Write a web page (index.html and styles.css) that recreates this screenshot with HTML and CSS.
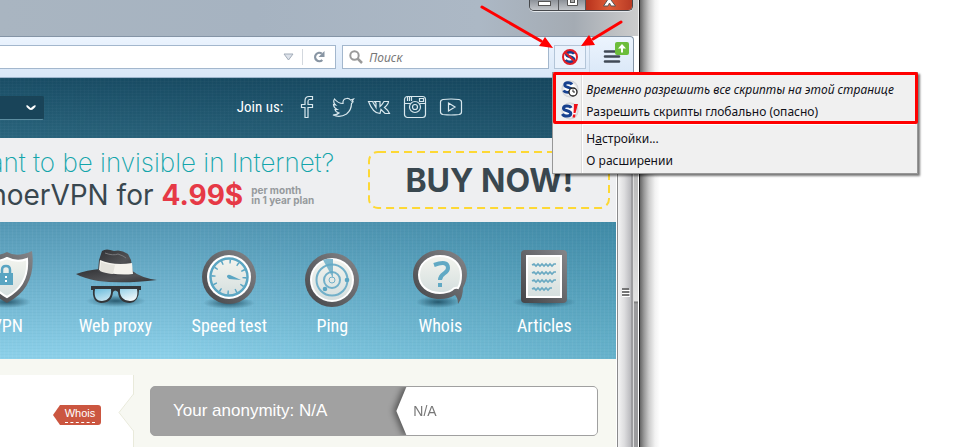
FILE: index.html
```
<!DOCTYPE html>
<html lang="ru">
<head>
<meta charset="utf-8">
<title>Whoer</title>
<link rel="stylesheet" href="styles.css">
</head>
<body>
<svg width="0" height="0" class="defs" aria-hidden="true">
  <defs>
    <linearGradient id="rim" x1="1" y1="0" x2="0" y2="1"><stop offset="0" stop-color="#85868a"/><stop offset="1" stop-color="#444548"/></linearGradient>
    <linearGradient id="face" x1="0" y1="0" x2="0" y2="1"><stop offset="0" stop-color="#f3f4ee"/><stop offset="1" stop-color="#d5dfdf"/></linearGradient>
    <linearGradient id="lens" x1="0" y1="0" x2="1" y2="1"><stop offset="0" stop-color="#6bbcdc"/><stop offset="1" stop-color="#ffffff"/></linearGradient>
    <linearGradient id="felt" x1="0" y1="0" x2="1" y2="1"><stop offset="0" stop-color="#303134"/><stop offset=".6" stop-color="#525356"/><stop offset="1" stop-color="#303134"/></linearGradient>
    <radialGradient id="shade"><stop offset="0" stop-color="#103c50" stop-opacity=".75"/><stop offset="1" stop-color="#103c50" stop-opacity="0"/></radialGradient>
    <radialGradient id="disc"><stop offset=".6" stop-color="#fff"/><stop offset="1" stop-color="#c9cbd0"/></radialGradient>
    <symbol id="s-mark" viewBox="0 0 16 16"><path d="M12.200 4.800C11 2.400 4.500 2 4.500 5.300C4.500 8.600 11.800 7 11.800 10.500C11.800 14 4.800 13.800 3.400 11" fill="none" stroke="#17418f" stroke-width="3"/></symbol>
  </defs>
</svg>
<div class="desktop">
  <div class="browser">
    <header class="titlebar">
      <div class="caption">
        <button class="cap" aria-label="Свернуть"><svg width="28" height="10"><rect x="8.500" y="1.500" width="12" height="4" fill="#fff" stroke="#555"/></svg></button>
        <button class="cap" aria-label="Развернуть"><svg width="26" height="10"><path d="M8.500-2V5.500H18.500V-2" fill="#fff" stroke="#555"/><rect x="11.500" y="-1.500" width="4" height="4" fill="#aaa" stroke="#555"/></svg></button>
        <button class="cap cap-close" aria-label="Закрыть"><svg width="46" height="10"><path d="M17.500 6L21.500 0L19-4H28L25 0L29.500 6H25L23.500 3L22 6Z" fill="#fff" stroke="#555"/></svg></button>
      </div>
    </header>
    <div class="toolbar">
      <div class="url">
        <input class="url-input" type="text" aria-label="Адрес">
        <button class="plain" aria-label="Журнал"><svg width="11" height="8"><path d="M1 1H10L5.500 7Z" fill="#dde2ea" stroke="#a2acb8"/></svg></button>
        <button class="plain reload" aria-label="Обновить"><svg width="14" height="14"><path d="M9.800 3.600A4.200 4.200 0 1 0 10.300 10" fill="none" stroke="#8895a3" stroke-width="2.300"/><path d="M12.500 1V7H6.500Z" fill="#8895a3"/></svg></button>
      </div>
      <div class="search">
        <svg width="15" height="15"><circle cx="5.500" cy="5.500" r="4.200" fill="none" stroke="#999" stroke-width="2"/><path d="M8.500 8.500L13 13" stroke="#999" stroke-width="2.500"/></svg>
        <input class="search-input" type="text" placeholder="Поиск" aria-label="Поиск">
      </div>
      <button class="ext" aria-label="NoScript"><svg width="18" height="18"><circle cx="9" cy="9" r="7" fill="#fff"/><use href="#s-mark" x="1" y="1" width="16" height="16"/><circle cx="9" cy="9" r="7" fill="none" stroke="#e01e26" stroke-width="2"/><path d="M4 4L14 14" stroke="#e01e26" stroke-width="2"/></svg></button>
      <button class="burger" aria-label="Меню">
        <svg width="28" height="24"><path d="M3 10.500H17M3 15.500H17M3 20.500H17" stroke="#414a56" stroke-width="2.600" stroke-linecap="round"/><rect x="13" y="1" width="14" height="13" rx="2" fill="#6cbd3b"/><path d="M20 3L24 7.500H21V11.500H19V7.500H16Z" fill="#fff"/></svg>
      </button>
    </div>
    <div class="viewport">
      <main class="page">
        <div class="topline">
          <select class="lang" aria-label="Language"><option></option></select>
          <svg class="chevron" width="12" height="8"><path d="M1.500 2C3 2 4 5 5.800 5S9 2 10.500 2" fill="none" stroke="#fff" stroke-width="2.200"/></svg>
          <div class="social">
            <span class="join">Join us:</span>
            <a href="#" aria-label="Facebook"><svg width="24" height="24"><path d="M10 22.500V12.500H6.500V9.500H10V6Q10 1.500 14 1.500H17.500V4.500H14.500Q13 4.500 13 6.500V9.500H17.500V12.500H13V22.500Z"/></svg></a>
            <a href="#" aria-label="Twitter"><svg width="24" height="24"><path d="M2 20Q6 20 8 18Q4.500 17 4 14.500H6Q2.500 12.500 2.500 9.500L4.500 10Q1.500 7 3.500 4Q7 8.500 12 8.500Q11.500 4 15.500 3.500Q18 3 19.500 5L22.500 4L21 6.500L22 6.800L20.500 8.500Q20.500 15 15.500 19Q9 23 2 20Z"/></svg></a>
            <a href="#" aria-label="VK"><svg width="24" height="24"><path d="M1.500 6.500H5.500L9 12.500V8L7.500 6.500H13V11.500Q15 10 17 6.500H21.500Q21.500 9 17.500 12.500Q21 15 22.500 18.500H18L14 14.500L13 18.500Q6 18.500 1.500 6.500Z"/></svg></a>
            <a href="#" aria-label="Instagram"><svg width="24" height="24"><rect x="1.500" y="1.500" width="21" height="21" rx="3"/><path d="M1.500 8.500H7.500M16.500 8.500H22.500M4.500 2V6M6.500 2V6M8.500 2V6M16.500 3.500H20.500V6.500H16.500Z"/><circle cx="12" cy="12" r="5.500"/><circle cx="12" cy="12" r="2.500"/></svg></a>
            <a href="#" aria-label="YouTube"><svg width="24" height="24"><path d="M4 4.500Q12 3.500 20 4.500Q22.500 5 22.500 7V17Q22.500 19 20 19.500Q12 20.500 4 19.500Q1.500 19 1.500 17V7Q1.500 5 4 4.500ZM9.500 8L16 12L9.500 16Z"/></svg></a>
          </div>
        </div>
        <a class="promo" href="#">
          <span class="pitch">
            <span class="ask">Want to be invisible in Internet?</span>
            <span class="offer"><span>WhoerVPN for</span> <b class="price">4.99$</b> <span class="per">per month<br>in 1 year plan</span></span>
          </span>
          <span class="buy"><svg class="dash" width="242" height="58"><rect x="1" y="1" width="240" height="56" rx="9"/></svg>BUY NOW!</span>
        </a>
        <nav class="tools">
          <a href="#"><svg width="84" height="66" viewBox="0 0 84 66"><ellipse cx="42" cy="56" rx="24" ry="6" fill="url(#shade)"/><path d="M42 6Q52 12 67 5Q72 42 42 57Q12 42 17 5Q32 12 42 6Z" fill="url(#rim)"/><path d="M42 12Q52 17 62 13Q64 39 42 51Q20 39 22 13Q32 17 42 12Z" fill="url(#face)" stroke="#fff" stroke-width="2"/><rect x="34" y="27" width="14" height="12" fill="#5aa5c2"/><path d="M37 27V24Q37 20 41 20T45 24V27" fill="none" stroke="#5aa5c2" stroke-width="2.500"/><path d="M41 30V36" stroke="#fff" stroke-width="2" stroke-dasharray="2"/></svg>VPN</a>
          <a href="#"><svg width="84" height="66" viewBox="0 0 84 66"><ellipse cx="43" cy="55" rx="30" ry="6" fill="url(#shade)"/><path d="M3 28Q14 24 27 23L58 24Q68 32 84 34Q50 38 25 35Q10 32 3 28Z" fill="url(#felt)"/><path d="M26 14L29 5Q33 2 41 5Q48 3 55 8L58 14L60 28Q42 31 25 25Z" fill="url(#felt)"/><path d="M27 14Q41 20 59 17L60 28Q42 30 26 24Z" fill="#f4f3ed"/><path d="M28 16Q36 19 42 19L40 28Q31 27 27 25Z" fill="#e4e3dc"/><path d="M32 7Q40 10 45 8Q51 10 53 12" stroke="#77787b" fill="none"/><path d="M18 40H68V44H66Q66 56 57 57Q46 57 45 46Q42 43 40 46Q39 57 28 57Q19 56 20 44H18Z" fill="#333639"/><path d="M22 43H38Q39 54 29 55Q20 55 22 43ZM47 43H64Q66 55 57 55Q46 54 47 43Z" fill="url(#lens)"/></svg>Web proxy</a>
          <a href="#"><svg width="84" height="66" viewBox="0 0 84 66"><ellipse cx="42" cy="57" rx="26" ry="6" fill="url(#shade)"/><circle cx="42" cy="31" r="27" fill="url(#rim)"/><circle cx="42" cy="31" r="22" fill="#fff"/><circle cx="42" cy="31" r="18.500" fill="url(#face)" stroke="#5ba6c3" stroke-width="2.500"/><circle cx="42" cy="31" r="15.500" fill="none" stroke="#5ba6c3" stroke-width="4" stroke-dasharray="1.500 6.616"/><path d="M40 31A2 2 0 0 1 43 29L54 34L42 33Z" fill="#5ba6c3"/></svg>Speed test</a>
          <a href="#"><svg width="84" height="66" viewBox="0 0 84 66"><circle cx="42" cy="34" r="27" fill="url(#rim)"/><circle cx="42" cy="34" r="22" fill="#fff"/><circle cx="42" cy="34" r="20" fill="url(#face)"/><g fill="none" stroke="#72b0c9" stroke-width="2"><circle cx="42" cy="34" r="15.500"/><circle cx="42" cy="34" r="8"/><circle cx="42" cy="34" r="3" stroke-width="1"/></g><path d="M33 14Q38 12 43 13V32Z" fill="#62a9c4" opacity=".8"/><circle cx="57" cy="34" r="2.300" fill="#5ba6c3"/><circle cx="35" cy="43" r="2.300" fill="#5ba6c3"/></svg>Ping</a>
          <a href="#"><svg width="84" height="66" viewBox="0 0 84 66"><ellipse cx="40" cy="56" rx="22" ry="6" fill="url(#shade)"/><path d="M42 4C58 4 69 14 69 28Q69 34 65 42Q65 51 60 58Q60 52 57 49Q51 53 42 53C26 53 15 43 15 29S27 4 42 4Z" fill="url(#rim)"/><path d="M42 10C54 10 63 17 63 29Q63 37 60 42Q56 41 54 44Q49 47 42 47C30 47 21 40 21 29S30 10 42 10Z" fill="url(#face)" stroke="#fff" stroke-width="2"/><path d="M36 19Q50 14 50 22C50 28 42 27 42 34" fill="none" stroke="#61a9c4" stroke-width="4"/><rect x="40" y="37" width="4" height="4" fill="#61a9c4"/></svg>Whois</a>
          <a href="#"><svg width="84" height="66" viewBox="0 0 84 66"><ellipse cx="42" cy="56" rx="32" ry="6" fill="url(#shade)"/><rect x="19" y="4" width="46" height="53" rx="4" fill="url(#rim)"/><rect x="25" y="10" width="34" height="41" fill="url(#face)" stroke="#fff" stroke-width="2"/><path d="M30 19L32 18L34 20L36 18L38 20L40 18L42 20L44 18L46 20L48 18L50 20L52 18L54 18M30 27L32 26L34 28L36 26L38 28L40 26L42 28L44 26L46 28L48 26L50 28L52 26L54 26M30 35L32 34L34 36L36 34L38 36L40 34L42 36L44 34L46 36L48 34L50 36L52 34L54 34M30 43L32 42L34 44L36 42L38 44L40 42L42 44L44 42L46 44L48 42L50 42" fill="none" stroke="#69a9c2" stroke-width="1.700"/></svg>Articles</a>
        </nav>
        <section class="info">
          <div class="panel">
            <a class="tag" href="#"><span>Whois</span></a>
            <svg class="notch" width="16" height="37"><path d="M16 0L1 18.500L16 37Z" fill="#f7f8f2"/><path d="M15.500 0L1 18.500L15.500 37" fill="none" stroke="#e9eadb"/></svg>
          </div>
          <div class="anon">
            <div class="anon-label">Your anonymity: N/A</div>
            <div class="anon-cast"><div class="anon-value">N/A</div></div>
          </div>
        </section>
      </main>
      <div class="gutter"><svg width="8" height="10"><path d="M0 1H7M0 4H7M0 7H7" stroke="#555" stroke-width="1.500"/><path d="M0 2.500H8M0 5.500H8M0 8.500H8" stroke="#fff"/></svg></div>
      <div class="frame"></div>
    </div>
    <div class="menu" role="menu">
      <button class="item temp" role="menuitem"><svg width="18" height="18"><circle cx="9" cy="9" r="8.500" fill="url(#disc)"/><use href="#s-mark" x="-1" width="16" height="15"/><circle cx="12" cy="12" r="4" fill="#fff" stroke="#222" stroke-width="1.300"/><path d="M12 9.500V12H14" fill="none" stroke="#222"/></svg>Временно разрешить все скрипты на этой странице</button>
      <button class="item" role="menuitem"><svg width="18" height="18"><circle cx="9" cy="9" r="8.500" fill="url(#disc)"/><use href="#s-mark" x="-2" y="1" width="16" height="16"/><path d="M13 2H17L14.500 11H12.500ZM12 12.500H14.500L14 15.500H11.500Z" fill="#f01018"/></svg>Разрешить скрипты глобально (опасно)</button>
      <hr>
      <button class="item" role="menuitem"><i></i><span>Н<u>а</u>стройки...</span></button>
      <button class="item" role="menuitem"><i></i>О расширении</button>
      <div class="mark"></div>
    </div>
    <svg class="arrows" width="150" height="50"><path d="M2 7L61 41M141 22L113 39" stroke="#f00" stroke-width="3" stroke-linecap="round"/><path d="M73 48L59 46L65 37ZM101 46L109 35L115 45Z" fill="#f00"/></svg>
  </div>
  <div class="outside"></div>
</div>
</body>
</html>
```
FILE: styles.css
```
* { box-sizing: border-box; }
body { margin: 0; background: #fff; font-family: "Noto Sans", sans-serif; }
button { font: inherit; border: 0; padding: 0; background: none; }
a { color: inherit; text-decoration: none; }
svg { display: block; flex: none; }
.defs { position: absolute; }

.desktop { display: flex; min-height: 100vh; overflow: hidden; }
.browser { flex: 640 1 0; min-width: 0; position: relative; display: flex; flex-direction: column; border-right: 1px solid #1c1c1e; }
.outside { flex: 327 1 0; background: linear-gradient(90deg, #666 0, #999 4px, #ccc 9px, #f2f2f2 15px, #fff 20px); }

.titlebar { height: 36px; padding-right: 5px; display: flex; justify-content: flex-end; align-items: flex-start; background: linear-gradient(90deg, #a9b5c1 0%, #a6b3c1 40%, #acb8c5 75%, #a4abb3 90%, #ccc 100%); border-right: 1px solid #eee; }
.caption { display: flex; height: 11px; border: 1px solid #46484c; border-top: 0; border-radius: 0 0 5px 5px; overflow: hidden; box-shadow: 0 1px 0 #e4e8ec; }
.cap { display: flex; border-right: 1px solid #55575b; background: linear-gradient(#8d9299, #c3c6ca); }
.cap-close { border-right: 0; background: linear-gradient(90deg, #b8321c, #dd5c38 50%, #b83a24); }

.toolbar { height: 42px; margin-right: 5px; border: 1px solid #8494a6; border-left: 0; border-bottom-color: #9fb6cd; border-radius: 0 4px 0 0; background: linear-gradient(#ecf4fe, #d9e7f7); display: flex; align-items: center; padding-right: 4px; }
.url, .search { height: 24px; border: 1px solid #a3b7cd; background: #fff; display: flex; align-items: center; }
.url { flex: 1; border-left: 0; margin-right: 6px; min-width: 0; }
.url-input, .search-input { flex: 1; min-width: 0; border: 0; padding: 0; background: none; outline: 0; }
.url-input { height: 20px; }
.plain { display: flex; justify-content: center; width: 28px; }
.plain svg { margin: auto; }
.reload { width: 33px; border-left: 1px solid #d3d8de; height: 16px; }
.search { width: 207px; padding-left: 6px; gap: 5px; margin-right: 5px; }
.search-input { font: italic 12px "Noto Sans", sans-serif; height: 20px; }
.search-input::placeholder { color: #777; opacity: 1; }
.ext { width: 32px; height: 24px; border: 1px solid #b3c5d8; background: #eaf2fc; display: flex; align-items: center; justify-content: center; }
.burger { display: flex; align-items: flex-start; width: 40px; height: 36px; margin-left: 3px; padding: 2px 0 0 12px; border-left: 1px solid #c7d6e6; }

.viewport { flex: 1; display: flex; min-height: 0; }
.page { flex: 1; min-width: 0; overflow: hidden; background: #f7f8f2; display: flex; flex-direction: column; }
.gutter { width: 16px; border-left: 1px solid #8a8a8c; border-right: 2px solid #9c9c9f; background: linear-gradient(90deg, #f4f4f4, #dcdcde 50%, #b8b8bc); display: flex; align-items: flex-start; padding: 210px 0 0 4px; margin-left: 1px; }
.frame { width: 6px; border-right: 1px solid #fff; border-left: 1px solid #ddd; background: linear-gradient(#aaa, #bbb 100px, #e0e0e0 223px, #777 224px, #9c9c9e 226px); }

.topline { height: 60px; display: flex; align-items: center; color: #fff; background: repeating-linear-gradient(90deg, #ffffff05 0 1px, #0000 1px 4px), repeating-linear-gradient(#ffffff05 0 1px, #0000 1px 3px), linear-gradient(100deg, #2c6a8400, #0c354c55), linear-gradient(#194d65, #2a657d); }
.lang { appearance: none; width: 44px; height: 24px; border: 1px solid #1b4457; border-left: 0; border-bottom-color: #5c8da0; border-radius: 0 2px 2px 0; background: #194459; }
.chevron { margin-left: -19px; pointer-events: none; }
.social { margin: -2px 153px 0 auto; display: flex; align-items: center; gap: 12px; }
.social svg { fill: none; stroke: #d9e8ee; stroke-width: 1.2; }
.join { font: 15px "Roboto Condensed", "Liberation Sans Narrow", "Open Sans Condensed", sans-serif; }

.promo { height: 84px; background: #eeeff1; display: flex; justify-content: flex-end; align-items: center; padding-right: 6px; font-family: Inter, sans-serif; color: #39474f; white-space: nowrap; }
.pitch { flex: none; display: flex; flex-direction: column; align-items: flex-end; margin-right: 34px; }
.ask { font-size: 26px; line-height: 30px; font-weight: 200; color: #13a5ab; }
.offer { display: flex; align-items: center; gap: 8px; font-size: 28px; line-height: 34px; padding-right: 20px; }
.price { color: #e63946; }
.per { font-size: 10px; line-height: 10px; font-weight: 700; color: #969a9d; }
.buy { flex: none; position: relative; width: 242px; height: 58px; display: flex; align-items: center; justify-content: center; font-size: 32px; font-weight: 700; }
.dash { position: absolute; inset: 0; fill: none; stroke: #fdd835; stroke-width: 2; stroke-dasharray: 8 5; }

.tools { height: 137px; display: grid; grid-template-columns: 102px 114px 114px 92px 124px 84px; justify-content: end; padding: 24px 30px 0 0; background: repeating-linear-gradient(90deg, #ffffff0a 0 1px, #0000 1px 4px), repeating-linear-gradient(#00506008 0 1px, #0000 1px 3px), linear-gradient(100deg, #fff0 30%, #00607a44), linear-gradient(#5598b5, #8dd1ea); }
.tools a { display: flex; flex-direction: column; align-items: center; color: #fff; font: 18px/28px "Roboto Condensed", "Liberation Sans Narrow", "Open Sans Condensed", sans-serif; }

.info { flex: 1; display: flex; padding: 16px 18px 0 0; gap: 16px; }
.panel { position: relative; flex: none; width: 134px; background: #fff; border-right: 1px solid #e9eadb; padding: 30px 32px 0 0; display: flex; justify-content: flex-end; align-items: flex-start; }
.notch { position: absolute; right: -1px; top: 19px; }
.tag { width: 48px; height: 20px; padding-left: 6px; text-align: center; background: #cb5640; color: #fff; clip-path: polygon(0 50%, 7px 0, 100% 0, 100% 100%, 7px 100%); border-radius: 3px; font: 11px/17px "Liberation Sans", sans-serif; }
.tag span { display: inline-block; border-bottom: 1px dashed #fff; }
.anon { flex: 1; height: 50px; margin-top: 11px; display: flex; border: 1px solid #a0a0a0; border-radius: 5px; background: #a1a1a1; overflow: hidden; font: 17px/48px "Liberation Sans", sans-serif; color: #fff; }
.anon-label { flex: 1; padding-left: 22px; white-space: nowrap; }
.anon-cast { width: 201px; filter: drop-shadow(-3px 0 3px #0007); }
.anon-value { padding-left: 17px; background: #fff; color: #777; font-size: 14px; clip-path: polygon(0 50%, 10px 0, 100% 0, 100% 100%, 10px 100%); }

.menu { position: absolute; left: calc(100% - 87px); top: 72px; width: 366px; padding: 5px 2px 2px; border: 1px solid #979797; background: linear-gradient(90deg, #f0f0f0 28px, #dcdcdc 28px 29px, #fff 29px 30px, #f0f0f0 30px); box-shadow: 2px 2px 2px #0008; }
.item { display: flex; align-items: center; width: 100%; height: 22px; padding-left: 6px; gap: 7px; color: #101018; font-size: 12px; white-space: nowrap; text-align: left; }
.item i, .item svg { width: 18px; }
.temp { font-style: italic; }
.menu hr { border: 0; border-top: 1px solid #ddd; border-bottom: 1px solid #fff; margin: 1px 0 2px 28px; }
.mark { position: absolute; inset: -1px -1px auto 0; height: 52px; border: 3px solid #f00; border-radius: 2px; pointer-events: none; }
.arrows { position: absolute; right: 9px; top: 0; pointer-events: none; }
```
